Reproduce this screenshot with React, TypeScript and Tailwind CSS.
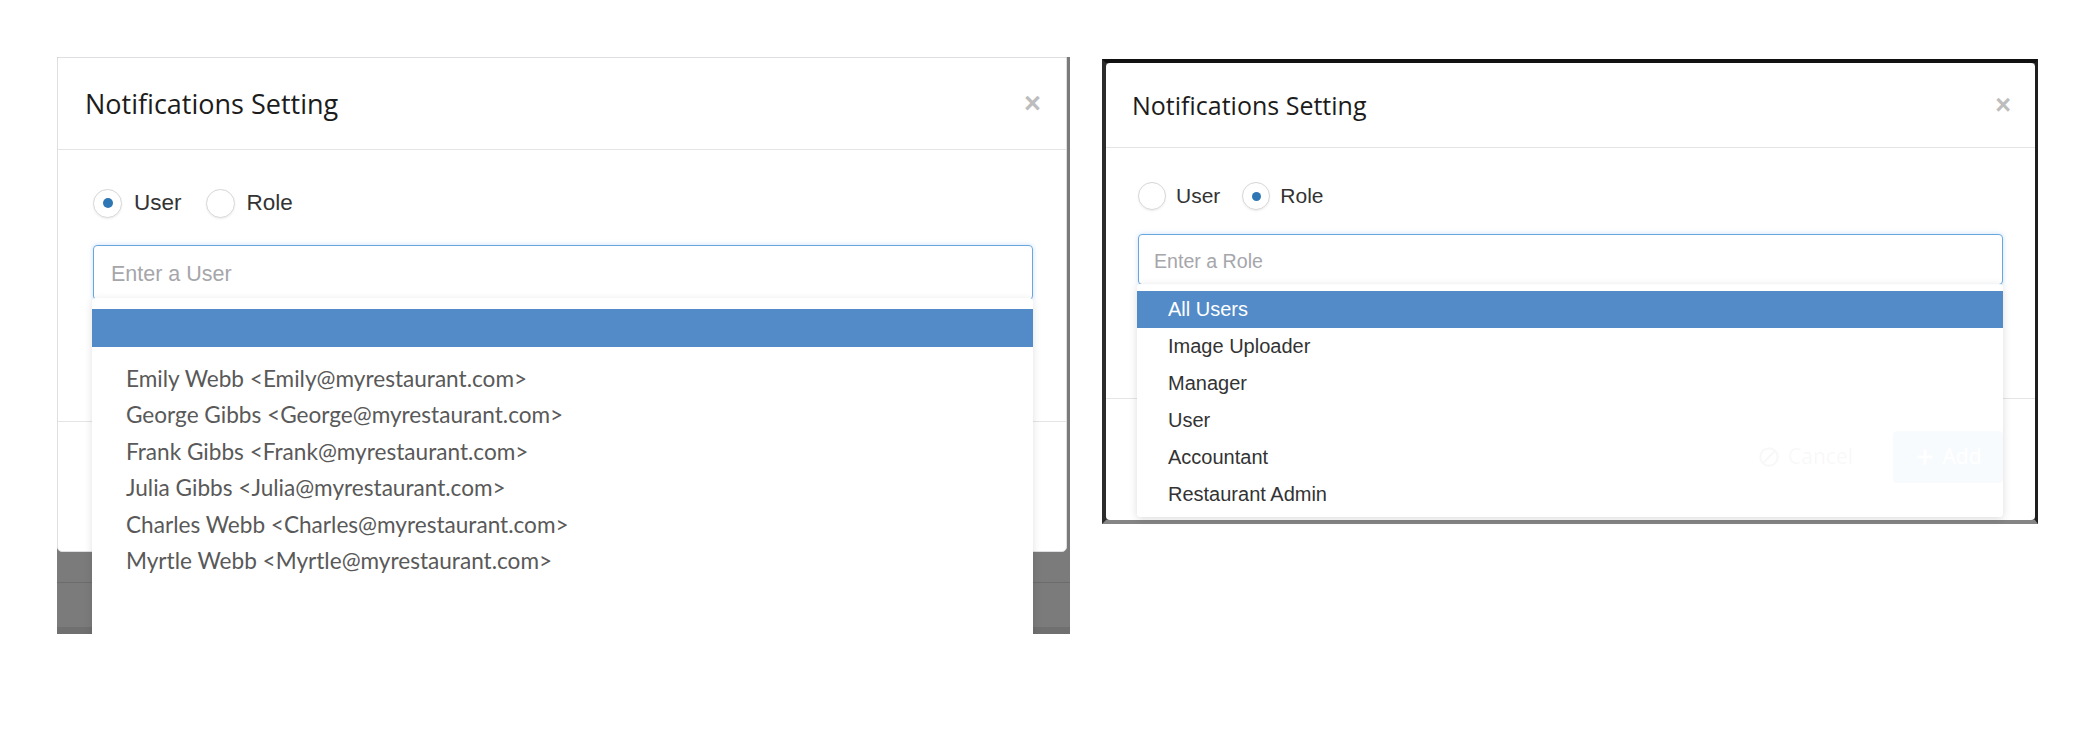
import React from "react";

const users = [
  "Emily Webb <Emily@myrestaurant.com>",
  "George Gibbs <George@myrestaurant.com>",
  "Frank Gibbs <Frank@myrestaurant.com>",
  "Julia Gibbs <Julia@myrestaurant.com>",
  "Charles Webb <Charles@myrestaurant.com>",
  "Myrtle Webb <Myrtle@myrestaurant.com>",
];

const roles = ["All Users", "Image Uploader", "Manager", "User", "Accountant", "Restaurant Admin"];

function CancelIcon({ size }: { size: number }) {
  return (
    <svg width={size} height={size} viewBox="0 0 24 24" fill="none" stroke="currentColor" strokeWidth="2.4">
      <circle cx="12" cy="12" r="9.5" />
      <path d="M5.5 18.5 18.5 5.5" />
    </svg>
  );
}

function PlusIcon({ size }: { size: number }) {
  return (
    <svg width={size} height={size} viewBox="0 0 24 24" fill="none" stroke="currentColor" strokeWidth="3">
      <path d="M12 3v18M3 12h18" />
    </svg>
  );
}

function UserModal() {
  return (
    <div className="relative w-[1013px] h-[577px] overflow-hidden bg-[#7b7b7b]">
      <div className="absolute left-0 right-0 top-[525px] h-px bg-[#6c6c6c]" />
      <div className="absolute left-0 right-0 top-[570px] h-[7px] bg-[#707070]" />
      <div className="relative flex flex-col w-[1010px] h-[495px] bg-white border border-[#dedee3] rounded-b-[5px]">
        <div className="flex items-center justify-between h-[92px] pl-[27px] pr-[25px] border-b border-[#e5e5e5]">
          <h2 className="font-['Open_Sans',sans-serif] text-[27px] leading-none text-[#1c1c1c]">Notifications Setting</h2>
          <span className="font-['Liberation_Sans',Arial,sans-serif] font-bold text-[29px] leading-none text-[#bdbdbd]">×</span>
        </div>

        <div className="h-[271px] pt-[38px] pl-[35px] pr-[33px] font-['Liberation_Sans',Arial,sans-serif]">
          <div className="flex items-center h-[30px] text-[22.5px] text-[#333]">
            <span className="flex items-center justify-center w-[29px] h-[29px] rounded-full border border-[#d6d6d6] shadow-[0_1px_2px_rgba(0,0,0,0.08)]">
              <span className="w-[10px] h-[10px] rounded-full bg-[#2f77b4]" />
            </span>
            <span className="ml-[12px]">User</span>
            <span className="ml-[24px] w-[29px] h-[29px] rounded-full border border-[#d6d6d6] shadow-[0_1px_2px_rgba(0,0,0,0.08)]" />
            <span className="ml-[12px]">Role</span>
          </div>

          <div className="relative mt-[27px]">
            <input
              readOnly
              placeholder="Enter a User"
              className="block w-full h-[55px] pl-[17px] pt-[4px] rounded-[4px] border border-[#69a6de] shadow-[0_0_5px_rgba(102,165,233,0.35)] outline-none text-[21.5px] placeholder:text-[#a6a6ab]"
            />
            <div className="absolute z-10 left-[-1px] top-[53px] w-[941px] h-[340px] pt-[11px] bg-white rounded-[4px] shadow-[0_2px_8px_rgba(0,0,0,0.12)]">
              <div className="h-[38px] bg-[#528bc7]" />
              <ul className="pt-[14px] font-['Lato',sans-serif] text-[22.6px] leading-[36.4px] text-[#595959]">
                {users.map((u) => (
                  <li key={u} className="pl-[34px]">{u}</li>
                ))}
              </ul>
            </div>
          </div>
        </div>

        <div className="flex-1 flex justify-end items-start gap-[42px] pt-[35px] pr-[33px] border-t border-[#e5e5e5] font-['Open_Sans',sans-serif]">
          <span className="flex items-center gap-[8px] h-[58px] text-[23px] text-[#333]">
            <CancelIcon size={24} />
            Cancel
          </span>
          <span className="flex items-center justify-center gap-[8px] w-[120px] h-[58px] rounded-[4px] bg-[#337ab7] text-[23px] text-white">
            <PlusIcon size={22} />
            Add
          </span>
        </div>
      </div>
    </div>
  );
}

function RoleModal() {
  return (
    <div className="mt-[2px] w-[936px] h-[465px] bg-[#444] border-t-4 border-l-4 border-r-[3px] border-b-4 border-t-[#111] border-l-[#2c2c2c] border-r-[#1e1e1e] border-b-[#858585]">
      <div className="flex flex-col w-full h-full bg-white rounded-[4px]">
        <div className="flex items-center justify-between h-[85px] pl-[26px] pr-[24px] border-b border-[#e5e5e5]">
          <h2 className="font-['Open_Sans',sans-serif] text-[25px] leading-none text-[#1c1c1c]">Notifications Setting</h2>
          <span className="font-['Liberation_Sans',Arial,sans-serif] font-bold text-[27px] leading-none text-[#bdbdbd]">×</span>
        </div>

        <div className="h-[250px] pt-[34px] pl-[32px] pr-[32px] font-['Liberation_Sans',Arial,sans-serif]">
          <div className="flex items-center h-[28px] text-[21px] text-[#333]">
            <span className="w-[28px] h-[28px] rounded-full border border-[#d6d6d6] shadow-[0_1px_2px_rgba(0,0,0,0.08)]" />
            <span className="ml-[10px]">User</span>
            <span className="ml-[22px] flex items-center justify-center w-[28px] h-[28px] rounded-full border border-[#d6d6d6] shadow-[0_1px_2px_rgba(0,0,0,0.08)]">
              <span className="w-[9px] h-[9px] rounded-full bg-[#2f77b4]" />
            </span>
            <span className="ml-[10px]">Role</span>
          </div>

          <div className="relative mt-[24px]">
            <input
              readOnly
              placeholder="Enter a Role"
              className="block w-full h-[51px] pl-[15px] pt-[4px] rounded-[4px] border border-[#69a6de] shadow-[0_0_5px_rgba(102,165,233,0.35)] outline-none text-[19.6px] placeholder:text-[#a6a6ab]"
            />
            <div className="absolute z-10 left-[-1px] top-[50px] w-[866px] h-[233px] pt-[7px] bg-white/[0.97] rounded-[4px] shadow-[0_2px_8px_rgba(0,0,0,0.14)]">
              <ul className="text-[20px] leading-[37px] text-[#333]">
                {roles.map((r, i) => (
                  <li key={r} className={i === 0 ? "h-[37px] pl-[31px] bg-[#528bc7] text-white" : "h-[37px] pl-[31px]"}>
                    {r}
                  </li>
                ))}
              </ul>
            </div>
          </div>
        </div>

        <div className="flex-1 flex justify-end items-start gap-[40px] pt-[32px] pr-[32px] border-t border-[#e5e5e5] font-['Open_Sans',sans-serif]">
          <span className="flex items-center gap-[8px] h-[52px] text-[21px] text-[#333]">
            <CancelIcon size={22} />
            Cancel
          </span>
          <span className="flex items-center justify-center gap-[8px] w-[110px] h-[52px] rounded-[4px] bg-[#337ab7] text-[21px] text-white">
            <PlusIcon size={20} />
            Add
          </span>
        </div>
      </div>
    </div>
  );
}

export default function App() {
  return (
    <div className="flex items-start gap-[32px] w-[2092px] min-h-[750px] pl-[57px] pt-[57px] bg-white">
      <UserModal />
      <RoleModal />
    </div>
  );
}
